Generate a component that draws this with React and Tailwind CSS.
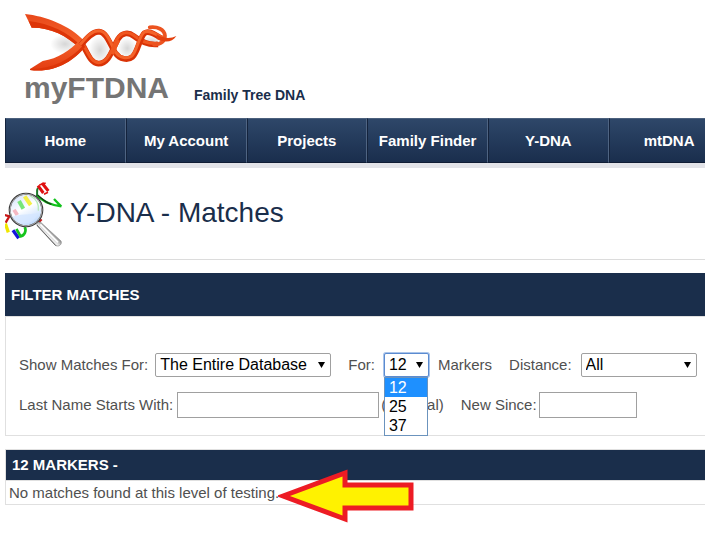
import React from 'react';

const navItems = ['Home', 'My Account', 'Projects', 'Family Finder', 'Y-DNA', 'mtDNA'];
const markerLevels = ['12', '25', '37'];

const HelixLogo = () => (
  <svg className="h-[59px] w-[154px]" viewBox="72 39 462 177" fill="none" aria-hidden="true">
    <defs>
      <linearGradient id="strand" x1="0" y1="40" x2="0" y2="215" gradientUnits="userSpaceOnUse">
        <stop offset="0" stopColor="#e8481a" />
        <stop offset="0.5" stopColor="#f4602a" />
        <stop offset="1" stopColor="#e23a10" />
      </linearGradient>
      <radialGradient id="shade">
        <stop offset="0" stopColor="#000" stopOpacity="0.16" />
        <stop offset="1" stopColor="#000" stopOpacity="0" />
      </radialGradient>
    </defs>
    <ellipse cx="195" cy="132" rx="44" ry="30" fill="url(#shade)" />
    <ellipse cx="300" cy="150" rx="34" ry="44" fill="url(#shade)" />
    <ellipse cx="382" cy="145" rx="30" ry="34" fill="url(#shade)" />
    <ellipse cx="456" cy="125" rx="32" ry="20" fill="url(#shade)" />
    {/* upper strand: broad end, two dips, then the curl */}
    <path d="M75 42 C135 48 210 76 254 124 L240 146 C200 106 150 82 95 83 Z" fill="url(#strand)" />
    <path d="M95 83 L86 63 C150 70 205 98 244 138 L240 146 C200 106 150 82 95 83Z" fill="#dd3508" />
    <path d="M245 130 C262 156 270 189 295 191 C328 192 338 144 354 117 C367 97 386 96 401 108 C425 127 446 136 474 133" stroke="#d93206" strokeWidth="17" />
    <path d="M246 127 C263 153 271 186 295 188 C326 189 337 141 353 114 C366 95 385 94 400 105 C424 125 446 133 472 130" stroke="#f0561f" strokeWidth="9" />
    {/* lower strand */}
    <path d="M90 207 L128 183 C175 177 210 150 236 124 L256 140 C222 180 165 220 90 210 Z" fill="url(#strand)" />
    <path d="M90 207 C160 206 210 180 250 136 L256 140 C222 182 165 220 90 210 Z" fill="#dd3508" />
    <path d="M242 136 C264 110 279 95 297 95 C322 96 332 140 347 160 C359 178 384 182 397 171 C414 157 418 113 434 99 C448 89 468 107 488 116" stroke="#d93206" strokeWidth="17" />
    <path d="M240 134 C262 108 277 92 297 92 C324 93 333 137 348 158 C359 174 382 178 395 168 C411 155 415 111 432 97 C447 86 468 104 488 113" stroke="#f4632a" strokeWidth="9" />
    <path d="M335 162 C340 148 346 133 354 119" stroke="#f0561f" strokeWidth="15" />
    <path d="M462 134 C486 132 495 122 495 107 C493 88 472 79 449 82" stroke="#ec5320" strokeWidth="11" strokeLinecap="round" />
    <path d="M470 103 C492 117 512 116 529 108 C516 128 494 128 470 117 Z" fill="#e4410f" />
  </svg>
);

const MagnifierIcon = () => (
  <svg className="h-[66px] w-[58px] shrink-0" viewBox="15 30 174 198" fill="none" aria-hidden="true">
    <defs>
      <linearGradient id="lens" x1="50" y1="70" x2="100" y2="165" gradientUnits="userSpaceOnUse">
        <stop offset="0" stopColor="#d6e4fb" />
        <stop offset="0.45" stopColor="#fff" />
        <stop offset="1" stopColor="#b8d5fb" />
      </linearGradient>
      <linearGradient id="handle" x1="130" y1="200" x2="150" y2="180" gradientUnits="userSpaceOnUse">
        <stop offset="0" stopColor="#777" />
        <stop offset="0.5" stopColor="#f2f2f2" />
        <stop offset="1" stopColor="#999" />
      </linearGradient>
    </defs>
    <path d="M110 80 C114 66 108 60 114 50" stroke="#1c7a2a" strokeWidth="6" />
    <path d="M114 44 L130 66 M126 36 L145 60" stroke="#e01010" strokeWidth="9" />
    <path d="M118 42 L137 36 M132 70 L144 64" stroke="#e01010" strokeWidth="5" />
    <path d="M111 75 C133 90 150 103 184 106 M184 107 L162 84" stroke="#12c21c" strokeWidth="7" />
    <path d="M113 72 C128 86 141 96 154 100" stroke="#173a17" strokeWidth="4" />
    <path d="M14 132 L28 136 L17 155" stroke="#c81717" strokeWidth="7" />
    <path d="M16 158 L25 184" stroke="#f0e600" strokeWidth="10" />
    <path d="M39 178 L56 202" stroke="#1616dd" strokeWidth="10" />
    <path d="M49 174 L62 196 M58 197 C75 195 80 178 74 168" stroke="#16c51d" strokeWidth="8" />
    <path d="M117 154 L125 145" stroke="#c81717" strokeWidth="6" />
    <circle cx="78" cy="117" r="49" fill="url(#lens)" stroke="#3a3a3a" strokeWidth="6" />
    <circle cx="78" cy="117" r="48" stroke="#b4b4b4" strokeWidth="3" />
    <path d="M74 76 L92 102" stroke="#f5ef45" strokeWidth="12" />
    <path d="M57 90 L70 113" stroke="#77e677" strokeWidth="12" />
    <path d="M42 116 L52 132" stroke="#f5b8c2" strokeWidth="11" />
    <path d="M91 75 C108 83 117 99 115 119" stroke="#b5eab9" strokeWidth="4" />
    <path d="M37 137 C56 129 94 131 114 126 C105 153 83 160 65 156 C51 153 42 146 37 137Z" fill="#d4e6ff" fillOpacity="0.8" />
    <path d="M110 157 L121 153 L183 210 C187 219 178 228 168 224 L112 166 Z" fill="url(#handle)" stroke="#888" strokeWidth="2" />
    <path d="M121 160 L174 214" stroke="#fff" strokeWidth="5" />
    <path d="M111 162 L167 224" stroke="#666" strokeWidth="3" />
  </svg>
);

const PointerArrow = () => (
  <svg
    className="pointer-events-none absolute -top-3 left-[272px] h-[54px] w-[138px]"
    viewBox="0 0 138 54"
    aria-hidden="true"
  >
    <path d="M5 27 L67 4 V16 H133 V39 H67 V50 Z" fill="#fff200" stroke="#ed1c24" strokeWidth="5" />
  </svg>
);

const Select = ({ id, className, focused, children }) => (
  <div className={`relative ${className}`}>
    <select
      id={id}
      className={`block h-6 w-full appearance-none rounded-xs border bg-white pl-1 text-base leading-5 text-black outline-none ${
        focused ? 'border-[#5b8bd0] ring-1 ring-[#a9c4ea]' : 'border-[#a0a0a0]'
      }`}
    >
      {children}
    </select>
    <svg className="pointer-events-none absolute top-[9px] right-[6px] h-[6px] w-[7px]" viewBox="0 0 7 6" aria-hidden="true">
      <path d="M0 0H7L3.5 6Z" fill="#000" />
    </svg>
  </div>
);

const Header = () => (
  <header className="flex items-end pt-[13px] pl-[19px]">
    <div>
      <HelixLogo />
      <div className="h-[46px] text-[30px] leading-8 font-bold text-[#757575]">myFTDNA</div>
    </div>
    <div className="mb-[14px] ml-4 text-sm leading-[18px] font-bold text-[#1a2e4b]">Family Tree DNA</div>
  </header>
);

const Navbar = () => (
  <nav className="flex overflow-hidden border-b-[5px] border-[#e2e3e8]">
    {navItems.map((item) => (
      <a
        key={item}
        href="#"
        className="flex h-[45px] w-[17.25%] shrink-0 items-center justify-center border-t border-r border-b border-l border-t-[#4b607d] border-r-[#4f6482] border-b-[#101d35] border-l-[#14233c] bg-linear-to-b from-[#2e4769] to-[#1a2e4d] text-[15px] font-bold whitespace-nowrap text-white"
      >
        {item}
      </a>
    ))}
  </nav>
);

const FilterPanel = () => (
  <section>
    <h2 className="bg-[#1a2e4b] px-[6px] text-[15px] leading-[43px] font-bold text-white">FILTER MATCHES</h2>
    <form className="border border-r-0 border-[#e0e0e0] pt-9 pb-[17px] pl-[13px]">
      <div className="flex h-6 items-center whitespace-nowrap">
        <label htmlFor="database">Show Matches For:</label>
        <Select id="database" className="ml-[7px] w-44 shrink-0">
          <option>The Entire Database</option>
        </Select>
        <label htmlFor="markers" className="ml-[17px]">For:</label>
        <div className="relative ml-[9px] w-[45px] shrink-0">
          <Select id="markers" className="w-full" focused>
            {markerLevels.map((level) => (
              <option key={level}>{level}</option>
            ))}
          </Select>
          <ul className="absolute top-6 left-0 z-10 w-11 border border-[#6b93bd] bg-white text-base leading-[19px] text-black">
            {markerLevels.map((level, i) => (
              <li key={level} className={i === 0 ? 'bg-[#1e90ff] px-1 text-white' : 'px-1'}>
                {level}
              </li>
            ))}
          </ul>
        </div>
        <span className="ml-[9px]">Markers</span>
        <label htmlFor="distance" className="ml-[17px]">Distance:</label>
        <Select id="distance" className="ml-[9px] w-[116px] shrink-0">
          <option>All</option>
        </Select>
      </div>
      <div className="mt-[15px] flex h-[26px] items-center whitespace-nowrap">
        <label htmlFor="lastName">Last Name Starts With:</label>
        <input id="lastName" type="text" className="ml-1 h-[26px] w-[202px] shrink-0 border border-[#a0a0a0] px-1 outline-none" />
        <span className="ml-[2px]">(optional)</span>
        <label htmlFor="newSince" className="ml-[17px]">New Since:</label>
        <input id="newSince" type="text" className="ml-[2px] h-[26px] w-[98px] shrink-0 border border-[#a0a0a0] px-1 outline-none" />
      </div>
    </form>
  </section>
);

const Results = () => (
  <section className="mt-[13px] border border-r-0 border-[#e0e0e0]">
    <h2 className="bg-[#1a2e4b] px-[6px] text-[15px] leading-[30px] font-bold text-white">12 MARKERS -</h2>
    <div className="relative border-t border-[#e0e0e0] pl-[3px] leading-[23px]">
      No matches found at this level of testing.
      <PointerArrow />
    </div>
  </section>
);

const App = () => {
  return (
    <div className="overflow-hidden bg-white pb-7 pl-[5px] font-['Liberation_Sans',Arial,sans-serif] text-[15px] leading-5 text-[#505050]">
      <Header />
      <Navbar />
      <main>
        <div className="mb-[13px] flex items-center border-b border-[#dcdcdc] pt-[13px] pb-3">
          <MagnifierIcon />
          <h1 className="ml-[7px] pb-[2px] text-[28px] leading-9 text-[#1a2e4b]">Y-DNA - Matches</h1>
        </div>
        <FilterPanel />
        <Results />
      </main>
    </div>
  );
};

export default App;
